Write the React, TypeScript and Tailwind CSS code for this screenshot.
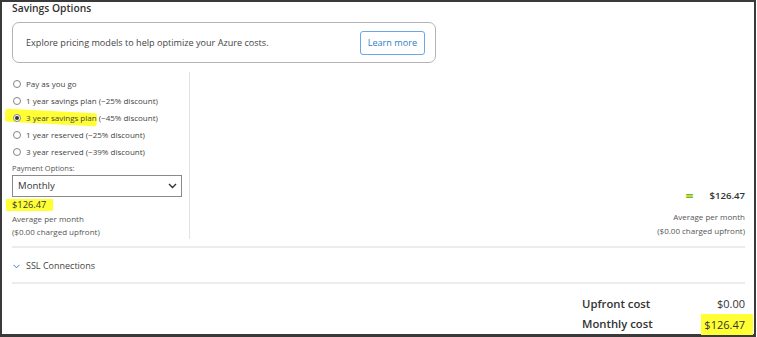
import React from 'react'

const options = [
    { label: "Pay as you go", note: "" },
    { label: "1 year savings plan", note: " (~25% discount)" },
    { label: "3 year savings plan", note: " (~45% discount)", checked: true },
    { label: "1 year reserved", note: " (~25% discount)" },
    { label: "3 year reserved", note: " (~39% discount)" },
]

const Radio = ({ checked }: { checked?: boolean }) => (
    <span className="relative flex items-center justify-center w-[8px] h-[8px] rounded-full border border-[#858585] bg-white shrink-0">
        {checked && <span className="w-[4px] h-[4px] rounded-full bg-[#333]" />}
    </span>
)

const App = () => {
    return (
        <div className="w-[757px] h-[337px] bg-white font-['Open_Sans',sans-serif] text-[#323130] overflow-hidden">
            <div className="w-[756px] h-[337px] border-[#3a3a3a] border-t-2 border-l-2 border-r-2 border-b-[3px] pl-[10px] pr-[9px]">
                <h2 className="text-[10.3px] font-semibold leading-[12px]">Savings Options</h2>

                <div className="mt-[8px] w-[424px] h-[41px] border border-[#b3b3b3] rounded-[7px] flex items-center justify-between pl-[13px] pr-[10px]">
                    <span className="text-[9.1px] text-[#444]">Explore pricing models to help optimize your Azure costs.</span>
                    <button className="h-[24px] px-[7px] border border-[#6ba7e6] rounded-[3px] text-[9.1px] text-[#2f7cc4] bg-white">
                        Learn more
                    </button>
                </div>

                <div className="mt-[9px] flex flex-row">
                    <div className="w-[178px] h-[167px] border-r border-[#e3e3e3] pt-[3px]">
                        <div className="flex flex-col">
                            {options.map(({ label, note, checked }) => (
                                <div key={label} className="relative flex items-center h-[17px] pl-[1px] text-[8px] text-[#444]">
                                    {checked && (
                                        <span className="absolute left-[-7px] top-[2px] w-[92px] h-[13px] bg-[#ffff33] rotate-[3deg] rounded-[3px]" />
                                    )}
                                    <span className="relative flex items-center gap-[5px]">
                                        <Radio checked={checked} />
                                        <span>
                                            {label}
                                            {note}
                                        </span>
                                    </span>
                                </div>
                            ))}
                        </div>

                        <p className="mt-[3px] text-[7.5px] leading-[10px] text-[#555]">Payment Options:</p>
                        <div className="mt-[2px] w-[170px] h-[22px] border border-[#8a8a8a] flex items-center justify-between pl-[5px] pr-[4px]">
                            <span className="text-[9.6px] text-[#333]">Monthly</span>
                            <svg width="9" height="6" viewBox="0 0 9 6" fill="none">
                                <path d="M1 1l3.5 3.5L8 1" stroke="#333" strokeWidth="1.4" />
                            </svg>
                        </div>
                        <div className="mt-[2px] flex">
                            <span className="text-[9.3px] leading-[12px] bg-[#ffff33] -ml-[6px] pl-[6px] pr-[7px] text-[#333]">$126.47</span>
                        </div>
                        <p className="mt-[1px] text-[8px] leading-[13px] text-[#555]">Average per month</p>
                        <p className="text-[8px] leading-[13px] text-[#555]">($0.00 charged upfront)</p>
                    </div>

                    <div className="flex-1 flex flex-col items-end justify-end pb-[1px]">
                        <div className="flex items-center gap-[16px]">
                            <span className="text-[14px] font-bold text-[#7fba00] leading-[16px]">=</span>
                            <span className="text-[9.6px] font-semibold text-[#333]">$126.47</span>
                        </div>
                        <p className="mt-[6px] text-[8px] leading-[14px] text-[#555]">Average per month</p>
                        <p className="text-[8px] leading-[14px] text-[#555]">($0.00 charged upfront)</p>
                    </div>
                </div>

                <div className="mt-[7px] w-[733px] h-[2px] bg-[#ececec]" />
                <div className="h-[34px] flex items-center gap-[6px] pl-[1px] pt-[2px]">
                    <svg width="7" height="5" viewBox="0 0 7 5" fill="none">
                        <path d="M0.5 0.8L3.5 3.8L6.5 0.8" stroke="#3b7ddd" strokeWidth="1" />
                    </svg>
                    <span className="text-[9px] text-[#444]">SSL Connections</span>
                </div>
                <div className="w-[733px] h-[2px] bg-[#ececec]" />

                <div className="ml-[570px] w-[163px] mt-[10px] flex flex-col">
                    <div className="flex justify-between items-center h-[20px]">
                        <span className="text-[11.3px] font-semibold text-[#333]">Upfront cost</span>
                        <span className="text-[11px] text-[#333]">$0.00</span>
                    </div>
                    <div className="flex justify-between items-center h-[21px]">
                        <span className="text-[11.3px] font-semibold text-[#333]">Monthly cost</span>
                        <span className="text-[11px] text-[#333] bg-[#ffff33] pl-[3px] pr-[8px] -mr-[8px] leading-[21px]">$126.47</span>
                    </div>
                </div>
            </div>
        </div>
    )
}

export default App
